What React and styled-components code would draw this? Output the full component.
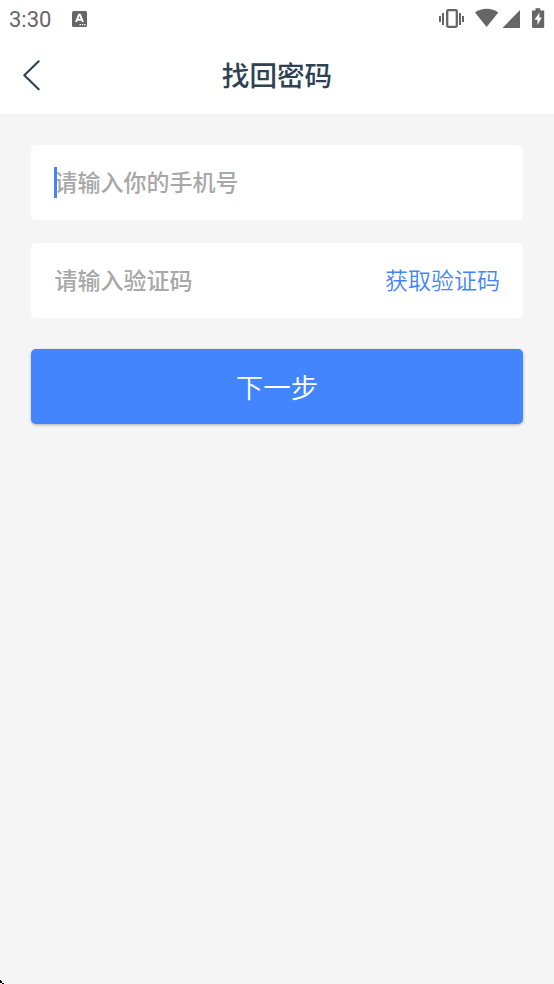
import styled, { createGlobalStyle } from "styled-components";

const GlobalStyle = createGlobalStyle`
  * {
    box-sizing: border-box;
  }

  body {
    margin: 0;
    background: #f5f5f5;
    font-family: "Noto Sans CJK SC", sans-serif;
  }
`;

const Page = styled.div`
  position: relative;
  display: flex;
  flex-direction: column;
  height: 984px;
  background: #f5f5f5;
  overflow: hidden;
`;

const StatusBar = styled.div`
  display: flex;
  align-items: center;
  height: 38px;
  padding: 0 9px;
  background: #fff;
  color: #666;
`;

const Clock = styled.span`
  width: 63px;
  padding-top: 2px;
  font-family: Roboto, sans-serif;
  font-size: 22px;
  line-height: 36px;
`;

const StatusIcons = styled.div`
  display: flex;
  align-items: center;
  margin-left: auto;
  margin-right: -9px;
`;

const Header = styled.header`
  display: grid;
  grid-template-columns: 64px 1fr 64px;
  align-items: center;
  height: 76px;
  padding-bottom: 2px;
  background: #fff;
`;

const BackButton = styled.button`
  display: flex;
  padding: 0 0 0 22px;
  border: 0;
  background: none;
`;

const Title = styled.h1`
  margin: 0;
  padding-bottom: 2px;
  color: #2f4254;
  font-size: 27.6px;
  font-weight: 500;
  line-height: 40px;
  text-align: center;
`;

const Form = styled.main`
  display: flex;
  flex-direction: column;
  padding: 31px 31px 0;
`;

const Field = styled.div`
  display: flex;
  align-items: center;
  justify-content: space-between;
  position: relative;
  height: 75px;
  margin-bottom: ${(props) => props.$gap}px;
  padding: 0 23px 4px 23.5px;
  border-radius: 5px;
  background: #fff;
`;

const Placeholder = styled.span`
  color: #a8a8a8;
  font-size: 23px;
  font-weight: 500;
  line-height: 34px;
`;

const Caret = styled.i`
  position: absolute;
  left: 23px;
  top: 22px;
  width: 3px;
  height: 31px;
  background: #4285ff;
`;

const CodeButton = styled.button`
  padding: 0;
  border: 0;
  background: none;
  color: #4285ff;
  font-family: inherit;
  font-size: 23px;
  font-weight: 350;
  line-height: 34px;
`;

const SubmitButton = styled.button`
  height: 75px;
  padding: 0 0 2px;
  border: 0;
  border-radius: 5px;
  background: #4285ff;
  box-shadow: 0 1px 3px rgba(0, 0, 0, 0.3);
  color: #fff;
  font-family: inherit;
  font-size: 27.5px;
  font-weight: 350;
  line-height: 40px;
`;

const Corner = styled.svg`
  position: absolute;
  left: 0;
  bottom: 0;
`;

function KeyboardIcon() {
  return (
    <svg width="15" height="16" viewBox="0 0 15 16">
      <rect width="15" height="16" rx="1.5" fill="#666" />
      <path
        d="M4 11 7 3.8h1L11 11M5 8.8h5"
        fill="none"
        stroke="#fff"
        strokeWidth="1.9"
      />
      <path d="M7.5 13h1.5v1.2H7.5zM10 13h1.3v1.2H10zM12.2 13h1.3v1.2h-1.3z" fill="#fff" />
    </svg>
  );
}

function SystemIcons() {
  return (
    <svg width="115" height="38" viewBox="0 0 115 38" fill="#666">
      <path d="M0 16h2v6H0zM3 13h2v12H3zM20 13h2v12h-2zM23 16h2v6h-2z" />
      <rect x="8.2" y="10.2" width="9.6" height="16.6" rx="1" fill="none" stroke="#666" strokeWidth="2.3" />
      <path d="M36 12.5C42.5 7.5 53 7.5 59.3 12.5L47.6 27z" />
      <path d="M81 10v18H63.5z" />
      <path d="M93 10.5h3.5V8.3h4.7v2.2h4v16.2q0 1.3-1.3 1.3H94.5q-1.5 0-1.5-1.3z" />
      <path d="m100.5 12.5-5 7.300h3V25l4.300-7.600h-2.600z" fill="#fff" />
    </svg>
  );
}

function BackIcon() {
  return (
    <svg width="20" height="32" viewBox="0 0 20 32">
      <path
        d="M16.7 2.3 2.3 16.3l14.4 14"
        fill="none"
        stroke="#2f4254"
        strokeWidth="2.1"
        strokeLinecap="round"
        strokeLinejoin="round"
      />
    </svg>
  );
}

export default function App() {
  return (
    <>
      <GlobalStyle />
      <Page>
        <StatusBar>
          <Clock>3:30</Clock>
          <KeyboardIcon />
          <StatusIcons>
            <SystemIcons />
          </StatusIcons>
        </StatusBar>
        <Header>
          <BackButton aria-label="返回">
            <BackIcon />
          </BackButton>
          <Title>找回密码</Title>
        </Header>
        <Form>
          <Field $gap={23}>
            <Placeholder>请输入你的手机号</Placeholder>
            <Caret />
          </Field>
          <Field $gap={31}>
            <Placeholder>请输入验证码</Placeholder>
            <CodeButton>获取验证码</CodeButton>
          </Field>
          <SubmitButton>下一步</SubmitButton>
        </Form>
        <Corner width="4" height="4" viewBox="0 0 4 4">
          <path d="M0 0h1v1h1v2H0zM2 3h2v1H2z" />
        </Corner>
      </Page>
    </>
  );
}
